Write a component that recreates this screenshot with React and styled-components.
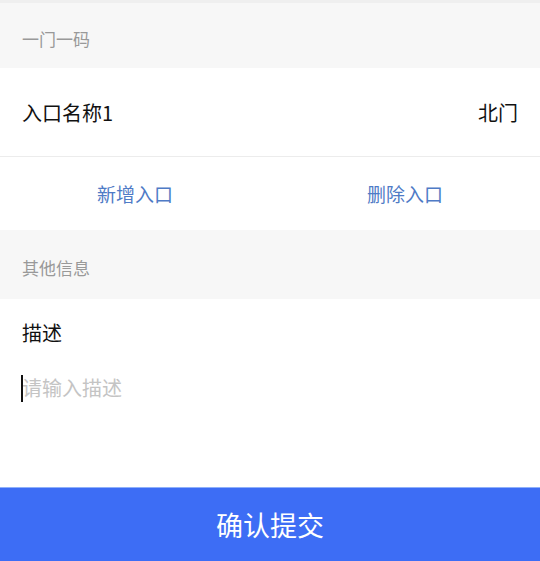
import React from 'react';
import styled, { createGlobalStyle } from 'styled-components';

const Global = createGlobalStyle`
    html, body {
        margin:0;
        padding:0;
        background:#fff;
        font-family:"Noto Sans CJK SC", "Noto Sans", sans-serif;
    }
    * { box-sizing:border-box; }
`

const Page = styled.div`
    width:540px;
    height:561px;
    display:flex;
    flex-direction:column;
    overflow:hidden;
`

const SectionHeader = styled.div`
    height:${props=>props.h}px;
    display:flex;
    align-items:center;
    padding:${props=>props.pt}px 22px 0;
    background:#f7f7f7;
    color:#999;
    font-size:17px;
    border-top:${props=>props.top?'3px solid #efefef':'none'};
`

const Row = styled.div`
    height:89px;
    display:flex;
    align-items:center;
    justify-content:space-between;
    padding:0 22px;
    font-size:20px;
    color:#111;
    border-bottom:1px solid #ececec;
`

const ActionBar = styled.div`
    height:73px;
    display:grid;
    grid-template-columns:1fr 1fr;
    align-items:center;
`

const Action = styled.button`
    border:none;
    background:none;
    font-family:inherit;
    font-size:19px;
    color:#4f7bc6;
    padding:0;
    text-align:center;
`

const Desc = styled.div`
    flex:1;
    display:flex;
    flex-direction:column;
    padding:18px 22px 0;
`

const Label = styled.div`
    font-size:20px;
    color:#111;
    line-height:32px;
`

const InputWrap = styled.div`
    position:relative;
    margin-top:24px;
`

const Input = styled.textarea`
    display:block;
    width:100%;
    border:none;
    outline:none;
    resize:none;
    padding:0;
    font-family:inherit;
    font-size:20px;
    line-height:30px;
    height:90px;
    caret-color:transparent;
    &::placeholder { color:#c4c4c4; }
`

const Caret = styled.span`
    position:absolute;
    left:-1px;
    top:2px;
    width:2px;
    height:27px;
    background:#111;
`

const Submit = styled.button`
    height:74px;
    border:none;
    border-top:1px solid #8fb0fa;
    background:#3d6df5;
    color:#fff;
    font-family:inherit;
    font-size:27px;
    padding:0;
`

export default function App() {
    return (
        <Page>
            <Global />
            <SectionHeader h={68} pt={6} top>一门一码</SectionHeader>
            <Row>
                <span>入口名称1</span>
                <span>北门</span>
            </Row>
            <ActionBar>
                <Action>新增入口</Action>
                <Action>删除入口</Action>
            </ActionBar>
            <SectionHeader h={69} pt={6}>其他信息</SectionHeader>
            <Desc>
                <Label>描述</Label>
                <InputWrap>
                    <Input placeholder="请输入描述" />
                    <Caret />
                </InputWrap>
            </Desc>
            <Submit>确认提交</Submit>
        </Page>
    );
}
